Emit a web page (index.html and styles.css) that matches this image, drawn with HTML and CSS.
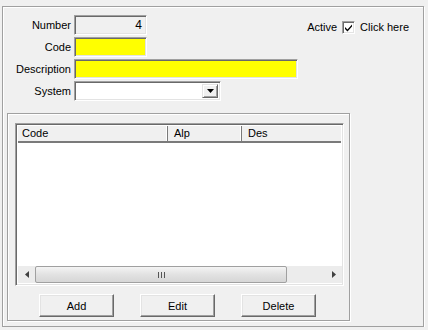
FILE: index.html
```html
<!DOCTYPE html>
<html lang="en">
<head>
    <meta charset="UTF-8">
    <title>Record</title>
    <link rel="stylesheet" href="styles.css">
</head>
<body>

    <div class="group outer">

        <div class="top">
            <!-- Form fields -->
            <div class="form">
                <label class="lbl">Number</label>
                <div class="field num">4</div>

                <label class="lbl">Code</label>
                <div class="field yellow short"></div>

                <label class="lbl">Description</label>
                <div class="field yellow long"></div>

                <label class="lbl">System</label>
                <div class="field combo">
                    <span class="drop">
                        <svg width="7" height="4" viewBox="0 0 7 4"><path d="M0 0H7L3.5 4Z" fill="#000"/></svg>
                    </span>
                </div>
            </div>

            <div class="active">
                <span>Active</span>
                <span class="check">
                    <svg width="9" height="9" viewBox="0 0 9 9"><path d="M1 4 L3.5 6.5 L8 1.5 L8 3.5 L3.5 8.5 L1 6 Z" fill="#000"/></svg>
                </span>
                <span>Click here</span>
            </div>
        </div>

        <div class="group inner">
            <div class="list">
                <div class="head">
                    <div class="col c1">Code</div>
                    <div class="col c2">Alp</div>
                    <div class="col c3">Des</div>
                </div>
                <div class="rows"></div>
                <div class="hscroll">
                    <span class="arrow">
                        <svg width="4" height="7" viewBox="0 0 4 7"><path d="M4 0V7L0 3.5Z" fill="#404040"/></svg>
                    </span>
                    <div class="track">
                        <div class="thumb">
                            <svg width="7" height="6" viewBox="0 0 7 6"><path d="M0.5 0V6M3.5 0V6M6.5 0V6" stroke="#555" stroke-width="1"/></svg>
                        </div>
                    </div>
                    <span class="arrow">
                        <svg width="4" height="7" viewBox="0 0 4 7"><path d="M0 0V7L4 3.5Z" fill="#404040"/></svg>
                    </span>
                </div>
            </div>

            <div class="buttons">
                <button class="btn">Add</button>
                <button class="btn">Edit</button>
                <button class="btn">Delete</button>
            </div>
        </div>

    </div>

</body>
</html>
```

FILE: styles.css
```css
/* General */
body {
    margin: 0;
    background-color: #f0f0f0;
    font-family: 'Liberation Sans', Arial, sans-serif;
    font-size: 11px;
    color: #000;
}

/* Etched group boxes */
.group {
    border: 1px solid #a0a0a0;
    box-shadow: inset 1px 1px 0 #fff, 1px 1px 0 #fff;
    box-sizing: border-box;
}

.outer {
    margin: 6px 0 0 2px;
    width: 422px;
    height: 321px;
    padding: 8px 0 0 5px;
}

.top {
    display: flex;
    justify-content: space-between;
}

/* Form grid */
.form {
    display: grid;
    grid-template-columns: 63px auto;
    column-gap: 3px;
    row-gap: 2px;
    align-items: center;
}

.lbl {
    text-align: right;
    line-height: 20px;
}

.field {
    height: 20px;
    box-sizing: border-box;
    border-top: 1px solid #a0a0a0;
    border-left: 1px solid #a0a0a0;
    border-right: 1px solid #fff;
    border-bottom: 1px solid #fff;
    box-shadow: inset 1px 1px 0 #696969, inset -1px -1px 0 #e3e3e3;
    background: #fff;
    width: 73px;
}

.num {
    background: #f0f0f0;
    text-align: right;
    line-height: 18px;
    padding-right: 4px;
    font-size: 12px;
}

.yellow {
    background: #ffff00;
}

.long {
    width: 224px;
}

.combo {
    width: 147px;
    display: flex;
    justify-content: flex-end;
    padding: 2px;
}

.drop {
    width: 16px;
    height: 14px;
    box-sizing: border-box;
    background: #f0f0f0;
    border-top: 1px solid #e3e3e3;
    border-left: 1px solid #e3e3e3;
    border-right: 1px solid #696969;
    border-bottom: 1px solid #696969;
    box-shadow: inset 1px 1px 0 #fff, inset -1px -1px 0 #a0a0a0;
    display: flex;
    align-items: center;
    justify-content: center;
}

/* Active checkbox */
.active {
    display: flex;
    align-items: center;
    gap: 5px;
    margin: 5px 14px 0 0;
    height: 14px;
    align-self: flex-start;
}

.check {
    width: 13px;
    height: 13px;
    box-sizing: border-box;
    background: #fff;
    border-top: 1px solid #a0a0a0;
    border-left: 1px solid #a0a0a0;
    border-right: 1px solid #fff;
    border-bottom: 1px solid #fff;
    box-shadow: inset 1px 1px 0 #696969, inset -1px -1px 0 #e3e3e3;
    display: flex;
    align-items: center;
    justify-content: center;
}

/* Inner group with list */
.inner {
    margin: 12px 0 0 -1px;
    width: 343px;
    height: 208px;
    padding: 9px 0 0 7px;
}

.list {
    width: 329px;
    height: 163px;
    box-sizing: border-box;
    border-top: 1px solid #a0a0a0;
    border-left: 1px solid #a0a0a0;
    border-right: 1px solid #fff;
    border-bottom: 1px solid #fff;
    box-shadow: inset 1px 1px 0 #696969, inset -1px -1px 0 #e3e3e3;
    background: #fff;
    padding: 2px;
    display: flex;
    flex-direction: column;
}

.head {
    display: flex;
    height: 17px;
    background: #f0f0f0;
    border-bottom: 2px solid #7a7a7a;
    box-sizing: border-box;
}

.col {
    line-height: 15px;
    padding-left: 4px;
    box-sizing: border-box;
}

.c1 {
    width: 150px;
    border-right: 1px solid #7a7a7a;
    box-shadow: inset -1px 0 0 #fff;
}

.c2 {
    width: 74px;
    border-right: 1px solid #7a7a7a;
    box-shadow: inset -1px 0 0 #fff;
    padding-left: 6px;
}

.c3 {
    flex: 1;
    padding-left: 6px;
}

.rows {
    flex: 1;
}

/* Horizontal scrollbar */
.hscroll {
    height: 17px;
    display: flex;
    align-items: center;
    background: #ececec;
    margin-right: -1px;
}

.arrow {
    width: 17px;
    display: flex;
    justify-content: center;
}

.track {
    flex: 1;
    height: 17px;
    margin-right: 38px;
    display: flex;
}

.thumb {
    flex: 1;
    box-sizing: border-box;
    border: 1px solid #a0a0a0;
    border-radius: 2px;
    background: linear-gradient(#f4f4f4, #e2e2e2 50%, #d6d6d6);
    display: flex;
    align-items: center;
    justify-content: center;
}

/* Buttons */
.buttons {
    display: flex;
    gap: 26px;
    margin: 8px 0 0 24px;
}

.btn {
    width: 75px;
    height: 23px;
    font-family: 'Liberation Sans', Arial, sans-serif;
    font-size: 11px;
    color: #000;
    background: #f0f0f0;
    border-top: 1px solid #fff;
    border-left: 1px solid #fff;
    border-right: 1px solid #696969;
    border-bottom: 1px solid #696969;
    box-shadow: inset -1px -1px 0 #a0a0a0, inset 1px 1px 0 #e3e3e3;
    padding: 0;
}
```
